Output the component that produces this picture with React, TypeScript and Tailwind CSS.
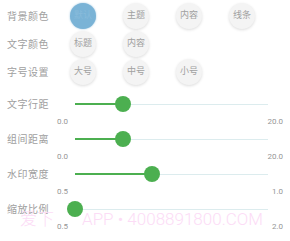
import React from "react"

const fontCls = "font-['Roboto','Noto_Sans_CJK_SC',sans-serif]"

const optionRows = [
  { label: "背景颜色", items: ["默认", "主题", "内容", "线条"], active: 0 },
  { label: "文字颜色", items: ["标题", "内容"], active: -1 },
  { label: "字号设置", items: ["大号", "中号", "小号"], active: -1 },
]

const sliders = [
  { label: "文字行距", min: "0.0", max: "20.0", pct: 0.25 },
  { label: "组间距离", min: "0.0", max: "20.0", pct: 0.25 },
  { label: "水印宽度", min: "0.5", max: "1.0", pct: 0.4 },
  { label: "缩放比例", min: "0.5", max: "2.0", pct: 0 },
]

function OptionCircle({ text, active }: { text: string; active: boolean }) {
  if (active) {
    return (
      <div className="flex h-[26px] w-[26px] items-center justify-center rounded-full bg-[#7ab3d6] text-[9px] text-[#88bbdb] shadow-[0_0_2px_rgba(122,179,214,0.8)]">
        {text}
      </div>
    )
  }
  return (
    <div className="flex h-[26px] w-[26px] items-center justify-center rounded-full bg-[#f4f4f4] text-[9px] text-[#a0a0a0] shadow-[0_1px_3px_rgba(0,0,0,0.14)]">
      {text}
    </div>
  )
}

function Slider({ pct }: { pct: number }) {
  const trackW = 193
  const pos = Math.round(trackW * pct)
  return (
    <div className="relative flex h-[16px] w-[193px] items-center">
      <div className="h-[2px] bg-[#4caf50]" style={{ width: pos }} />
      <div className="h-[1px] flex-1 bg-[#dcecee]" />
      <div
        className="absolute top-0 h-[16px] w-[16px] rounded-full bg-[#4caf50]"
        style={{ left: pos - 8 }}
      />
    </div>
  )
}

export default function App() {
  return (
    <div className={`relative h-[241px] w-[290px] overflow-hidden bg-white ${fontCls}`}>
      <div className="flex flex-col pt-[2px]">
        {optionRows.map((row) => (
          <div key={row.label} className="flex h-[28px] items-center">
            <div className="w-[70px] pl-[7px] text-[10px] tracking-[0.5px] text-[#a0a0a0]">{row.label}</div>
            <div className="flex items-center gap-[27px]">
              {row.items.map((it, i) => (
                <OptionCircle key={it} text={it} active={i === row.active} />
              ))}
            </div>
          </div>
        ))}
      </div>

      <div className="mt-[10px] flex flex-col">
        {sliders.map((s) => (
          <div key={s.label} className="mb-[3px] flex flex-col">
            <div className="flex h-[16px] items-center">
              <div className="w-[75px] pl-[7px] text-[10px] tracking-[0.5px] text-[#a0a0a0]">{s.label}</div>
              <Slider pct={s.pct} />
            </div>
            <div className="mt-[4px] flex h-[12px] items-center justify-between pl-[57px] pr-[7px] text-[8px] text-[#969696]">
              <span>{s.min}</span>
              <span>{s.max}</span>
            </div>
          </div>
        ))}
      </div>

      <div className="pointer-events-none absolute left-[20px] top-[209px] flex text-[17px] font-light leading-[20px] text-[#fcdcf6]">
        <span>爱下</span>
        <span className="ml-[28px]">APP • 4008891800.COM</span>
      </div>
    </div>
  )
}
